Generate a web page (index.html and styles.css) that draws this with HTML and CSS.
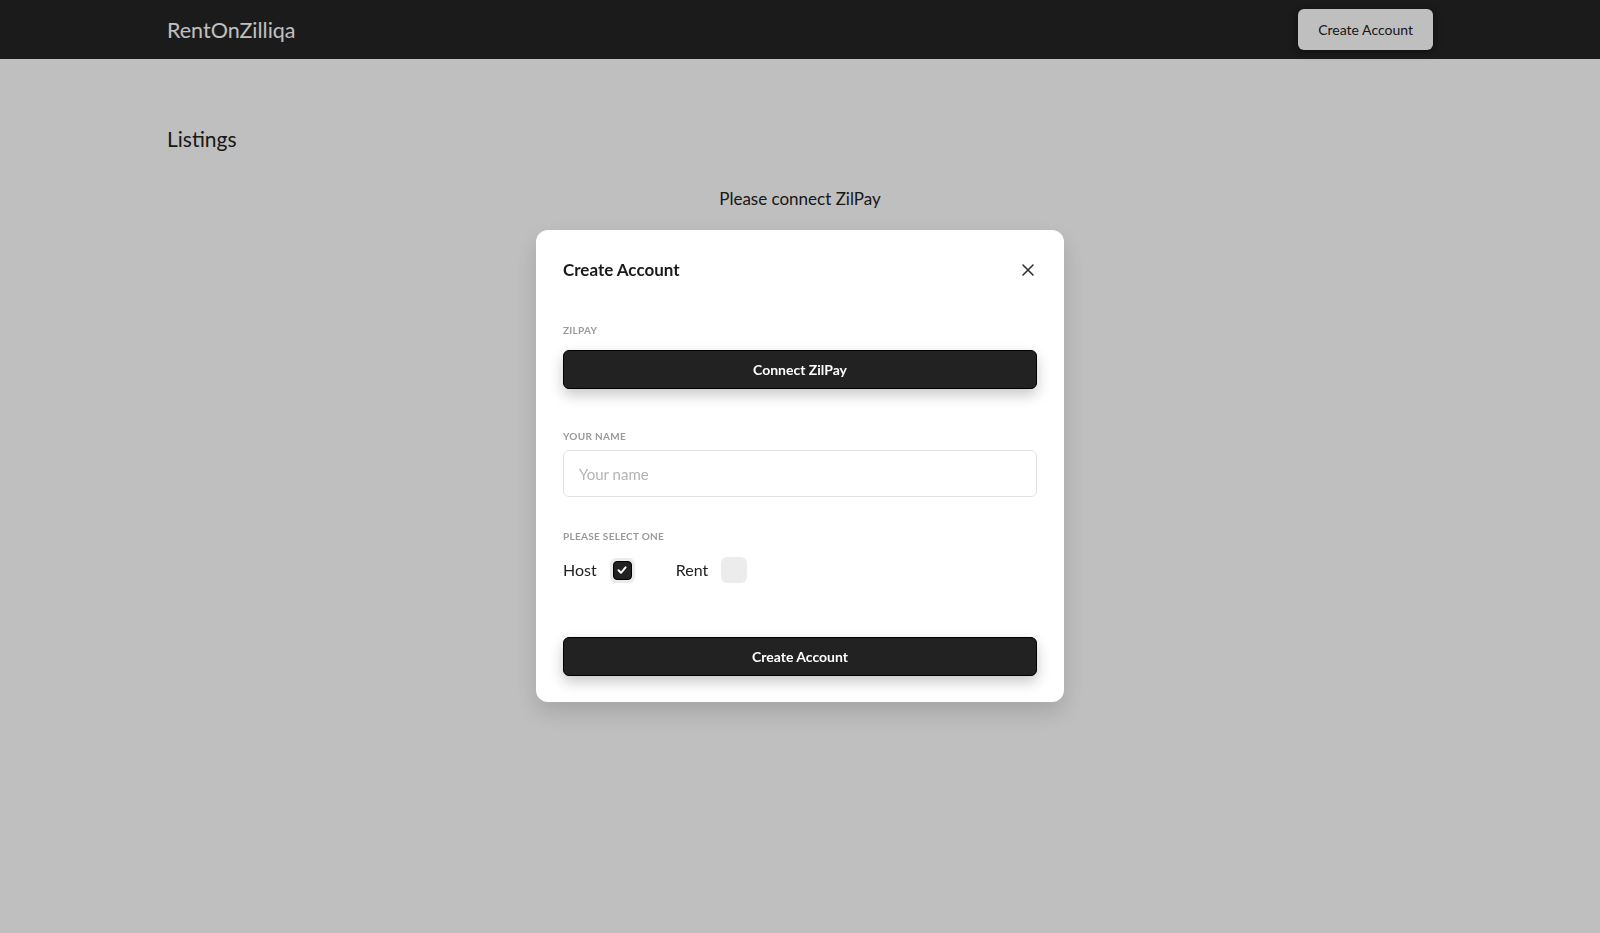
FILE: index.html
```html
<!DOCTYPE html>
<html lang="en">
<head>
<meta charset="UTF-8">
<meta name="viewport" content="width=device-width, initial-scale=1.0">
<title>RentOnZilliqa</title>
<link rel="stylesheet" href="styles.css">
</head>
<body>
    <nav class="navbar">
        <div class="wrap nav-inner">
            <div class="logo">RentOnZilliqa</div>
            <button class="nav-btn">Create Account</button>
        </div>
    </nav>

    <main class="wrap">
        <h2 class="page-title">Listings</h2>
        <p class="notice">Please connect ZilPay</p>
    </main>

    <div class="overlay">
        <div class="modal">
            <div class="modal-header">
                <h3 class="modal-title">Create Account</h3>
                <button class="close-btn" aria-label="Close">
                    <svg width="12" height="12" viewBox="0 0 12 12">
                        <path d="M1 1L11 11M11 1L1 11" stroke="#2b2b2b" stroke-width="1.5" stroke-linecap="round"/>
                    </svg>
                </button>
            </div>
            <div class="modal-body">
                <div class="field field-zilpay">
                    <label class="field-label">ZilPay</label>
                    <button class="dark-btn">Connect ZilPay</button>
                </div>
                <div class="field field-name">
                    <label class="field-label" for="name">Your name</label>
                    <input id="name" class="text-input" type="text" placeholder="Your name">
                </div>
                <div class="field field-role">
                    <label class="field-label">Please select one</label>
                    <div class="options">
                        <div class="option">
                            <span>Host</span>
                            <span class="check checked">
                                <span class="check-inner">
                                    <svg width="12" height="12" viewBox="0 0 12 12">
                                        <path d="M2.5 6.3L5 8.8L9.6 3.4" fill="none" stroke="#fff" stroke-width="2" stroke-linecap="round" stroke-linejoin="round"/>
                                    </svg>
                                </span>
                            </span>
                        </div>
                        <div class="option">
                            <span>Rent</span>
                            <span class="check"></span>
                        </div>
                    </div>
                </div>
                <button class="dark-btn submit-btn">Create Account</button>
            </div>
        </div>
    </div>
</body>
</html>
```

FILE: styles.css
```css
* {
    box-sizing: border-box;
}
body {
    margin: 0;
    font-family: Lato, "Open Sans", sans-serif;
    background: #fff;
    color: #222;
}
.wrap {
    max-width: 1300px;
    margin: 0 auto;
    padding: 0 17px;
}
.navbar {
    background: #242424;
    height: 59px;
}
.nav-inner {
    height: 100%;
    display: flex;
    justify-content: space-between;
    align-items: center;
}
.logo {
    color: #fff;
    font-size: 21.5px;
}
.nav-btn {
    font-family: inherit;
    font-size: 14px;
    color: #222;
    background: #fff;
    border: none;
    border-radius: 6px;
    height: 41px;
    padding: 0 20px;
    margin-top: -1px;
    box-shadow: 0 2px 8px rgba(0,0,0,0.45);
}
.page-title {
    margin: 66px 0 0;
    font-size: 21px;
    line-height: 28px;
    font-weight: 400;
}
.notice {
    margin: 34px 0 0;
    text-align: center;
    font-size: 17px;
    line-height: 24px;
}
.overlay {
    position: fixed;
    inset: 0;
    background: rgba(0,0,0,0.25);
    display: flex;
    justify-content: center;
    align-items: flex-start;
    padding-top: 230px;
}
.modal {
    width: 528px;
    background: #fff;
    border-radius: 12px;
    box-shadow: 0 10px 25px rgba(0,0,0,0.15);
    padding: 24px 27px 26px;
}
.modal-header {
    display: flex;
    justify-content: space-between;
    align-items: center;
    margin-right: -7px;
}
.modal-title {
    margin: 0;
    font-size: 17px;
    line-height: 24px;
    font-weight: 700;
    color: #1a1a1a;
}
.close-btn {
    width: 32px;
    height: 32px;
    border: none;
    background: none;
    padding: 0;
    display: flex;
    align-items: center;
    justify-content: center;
}
.field-label {
    display: block;
    font-size: 10px;
    line-height: 12px;
    font-weight: 700;
    letter-spacing: 0.3px;
    text-transform: uppercase;
    color: #9a9a9a;
}
.field-zilpay {
    margin-top: 38px;
}
.field-zilpay .field-label {
    margin-bottom: 14px;
}
.field-name {
    margin-top: 41px;
}
.field-name .field-label {
    margin-bottom: 8px;
}
.field-role {
    margin-top: 33px;
}
.field-role .field-label {
    margin-bottom: 15px;
}
.dark-btn {
    display: block;
    width: 100%;
    height: 39px;
    font-family: inherit;
    font-size: 14px;
    font-weight: 700;
    color: #fff;
    background: #222;
    border: 1px solid #000;
    border-radius: 6px;
    box-shadow: 0 6px 14px rgba(0,0,0,0.22);
}
.text-input {
    display: block;
    width: 100%;
    height: 47px;
    padding: 0 15px;
    font-family: inherit;
    font-size: 15px;
    color: #222;
    border: 1px solid #e2e2e2;
    border-radius: 6px;
    outline: none;
}
.text-input::placeholder {
    color: #b4b4b4;
}
.options {
    display: flex;
    gap: 41px;
}
.option {
    display: flex;
    align-items: center;
    gap: 13px;
    font-size: 16px;
    line-height: 24px;
    color: #222;
}
.check {
    width: 26px;
    height: 26px;
    border-radius: 6px;
    background: #ececec;
    display: flex;
    align-items: center;
    justify-content: center;
}
.check.checked {
    width: 25px;
    height: 25px;
}
.check-inner {
    width: 19px;
    height: 19px;
    border-radius: 4px;
    background: #222;
    border: 1px solid #000;
    display: flex;
    align-items: center;
    justify-content: center;
}
.submit-btn {
    margin-top: 54px;
}
```
